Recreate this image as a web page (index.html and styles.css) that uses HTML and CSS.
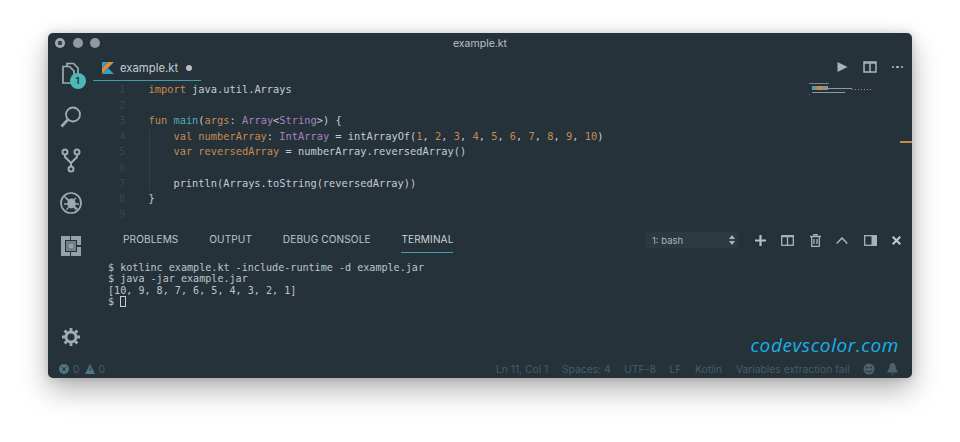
FILE: index.html
```html
<!DOCTYPE html>
<html lang="en">
<head>
<meta charset="utf-8">
<title>example.kt</title>
<link rel="stylesheet" href="styles.css">
</head>
<body>
<div class="window">
  <header class="titlebar">
    <div class="lights"><span class="light light-first"></span><span class="light"></span><span class="light"></span></div>
    <div class="title">example.kt</div>
  </header>
  <div class="main">
    <nav class="activity">
      <div class="act-icon">
        <svg width="26" height="26" viewBox="0 0 26 26" fill="none" stroke="#9fabaf" stroke-width="1.700"><path d="M9 5V2.500h6.500L20 7v10h-2.500"/><path d="M5 5.500h6.500L16 10v12H5z"/></svg>
        <span class="badge">1</span>
      </div>
      <div class="act-icon">
        <svg width="26" height="26" viewBox="0 0 26 26" fill="none" stroke="#9fabaf"><circle cx="15" cy="10.500" r="7" stroke-width="1.800"/><path d="M10 15.500l-6.500 7" stroke-width="2.600"/></svg>
      </div>
      <div class="act-icon">
        <svg width="26" height="26" viewBox="0 0 26 26" fill="none" stroke="#9fabaf" stroke-width="2"><circle cx="7" cy="5" r="2.500"/><circle cx="19" cy="5" r="2.500"/><circle cx="13" cy="22" r="2.500"/><path d="M7 7.500V10l6 6 6-6V7.500M13 16v3.500"/></svg>
      </div>
      <div class="act-icon">
        <svg width="26" height="26" viewBox="0 0 26 26" fill="none" stroke="#9fabaf" stroke-width="1.700"><circle cx="13" cy="13" r="10"/><path d="M6 6l14 14" stroke-width="1.500"/><ellipse cx="13.500" cy="13.500" rx="4.200" ry="5" fill="#9fabaf" stroke="none"/><path d="M8 8l3 2.500M18 8l-3 2.500M6 14h4M17 14h4M8.500 19.500L11 17M18 19.500L16 17" stroke-width="1.300"/></svg>
      </div>
      <div class="act-icon">
        <svg width="26" height="26" viewBox="0 0 26 26"><path d="M3 3h9v4H7v12h5v4H3z" fill="#95a3a8"/><path d="M13 3h10v9h-4V7h-6zM19 14h4v9H13v-4h6z" fill="#95a3a8"/><rect x="8" y="8" width="10" height="10" fill="#6f8087"/><rect x="11" y="11" width="4" height="4" fill="#95a3a8"/></svg>
      </div>
      <div class="act-icon act-gear">
        <svg width="20" height="20" viewBox="0 0 20 20" fill="none"><circle cx="10" cy="10" r="5" stroke="#9fabaf" stroke-width="3"/><path d="M10 1v4M10 15v4M1 10h4M15 10h4M3.600 3.600l2.900 2.900M13.500 13.500l2.900 2.900M16.400 3.600l-2.900 2.900M6.500 13.500l-2.900 2.900" stroke="#9fabaf" stroke-width="2.800"/></svg>
      </div>
    </nav>
    <div class="content">
      <div class="tabbar">
        <div class="tab">
          <svg class="kt" width="12" height="12" viewBox="0 0 12 12"><path d="M0 0h6L0 6z" fill="#2d9fc9"/><path d="M6 0h6L0 12V6z" fill="#e08a3c"/><path d="M0 12l6-6 6 6z" fill="#2d9fc9"/></svg>
          <span class="tab-name">example.kt</span>
          <span class="dirty"></span>
        </div>
        <div class="editor-actions">
          <svg width="12" height="12" viewBox="0 0 12 12"><path d="M1.500 1l10 5-10 5z" fill="#a9b5b8"/></svg>
          <svg width="14" height="12" viewBox="0 0 14 12" fill="none" stroke="#a9b5b8" stroke-width="1.500"><rect x="1" y="1" width="12" height="10"/><path d="M7 1v10M1 2h12" /></svg>
          <span class="dots"><i></i><i></i><i></i></span>
        </div>
      </div>
      <section class="editor">
        <div class="line"><span class="num">1</span><span class="code"><span class="k">import</span> java.util.Arrays</span></div>
        <div class="line"><span class="num">2</span><span class="code"></span></div>
        <div class="line"><span class="num">3</span><span class="code"><span class="k">fun</span> <span class="f">main</span>(<span class="k">args</span>: <span class="t">Array</span>&lt;<span class="t">String</span>&gt;) {</span></div>
        <div class="line"><span class="num">4</span><span class="code guide">    <span class="k">val numberArray</span>: <span class="t">IntArray</span> = intArrayOf(<span class="k">1</span>, <span class="k">2</span>, <span class="k">3</span>, <span class="k">4</span>, <span class="k">5</span>, <span class="k">6</span>, <span class="k">7</span>, <span class="k">8</span>, <span class="k">9</span>, <span class="k">10</span>)</span></div>
        <div class="line"><span class="num">5</span><span class="code guide">    <span class="k">var reversedArray</span> = numberArray.reversedArray()</span></div>
        <div class="line"><span class="num">6</span><span class="code guide"></span></div>
        <div class="line"><span class="num">7</span><span class="code guide">    println(Arrays.toString(reversedArray))</span></div>
        <div class="line"><span class="num">8</span><span class="code">}</span></div>
        <div class="line"><span class="num">9</span><span class="code"></span></div>
        <div class="minimap">
          <i class="mm mm-a"></i>
          <i class="mm mm-b"></i>
          <i class="mm mm-c"></i>
          <i class="mm mm-d"></i>
          <i class="mm mm-e"></i>
          <i class="mm mm-f"></i>
        </div>
        <i class="ruler"></i>
      </section>
      <section class="panel">
        <div class="panel-head">
          <div class="panel-tabs">
            <span class="ptab">PROBLEMS</span>
            <span class="ptab">OUTPUT</span>
            <span class="ptab">DEBUG CONSOLE</span>
            <span class="ptab ptab-on">TERMINAL</span>
          </div>
          <div class="panel-actions">
            <div class="select"><span>1: bash</span><svg width="6" height="10" viewBox="0 0 6 10"><path d="M3 0l3 4H0zM3 10L0 6h6z" fill="#a9b5b8"/></svg></div>
            <svg width="11" height="11" viewBox="0 0 11 11"><path d="M5.500 0v11M0 5.500h11" stroke="#b4bfc2" stroke-width="2.200"/></svg>
            <svg width="13" height="11" viewBox="0 0 13 11" fill="none" stroke="#a9b5b8" stroke-width="1.300"><rect x=".7" y=".7" width="11.600" height="9.600"/><path d="M6.500 1v10M1 1.500h11"/></svg>
            <svg width="11" height="13" viewBox="0 0 11 13" fill="none" stroke="#a9b5b8" stroke-width="1.300"><path d="M0 2.500h11M4 2.500V.7h3v1.800M1.700 2.500v9.800h7.600V2.500M4 5v5M7 5v5"/></svg>
            <svg width="12" height="7" viewBox="0 0 12 7" fill="none" stroke="#a9b5b8" stroke-width="1.500"><path d="M.7 6.500L6 1l5.300 5.500"/></svg>
            <svg width="13" height="11" viewBox="0 0 13 11"><rect x=".7" y=".7" width="11.600" height="9.600" fill="none" stroke="#a9b5b8" stroke-width="1.300"/><rect x="7.500" y="1" width="5" height="9" fill="#a9b5b8"/></svg>
            <svg width="9" height="9" viewBox="0 0 9 9"><path d="M.7.700l7.600 7.600M8.300.700L.7 8.300" stroke="#c0cacc" stroke-width="2"/></svg>
          </div>
        </div>
        <div class="terminal">
          <div class="term-line">$ kotlinc example.kt -include-runtime -d example.jar</div>
          <div class="term-line">$ java -jar example.jar</div>
          <div class="term-line">[10, 9, 8, 7, 6, 5, 4, 3, 2, 1]</div>
          <div class="term-line">$ <span class="cursor"></span></div>
        </div>
        <div class="brand">codevscolor.com</div>
      </section>
    </div>
  </div>
  <footer class="status">
    <div class="status-left">
      <svg width="10" height="10" viewBox="0 0 10 10"><circle cx="5" cy="5" r="5" fill="#4f7486"/><path d="M3 3l4 4M7 3L3 7" stroke="#25323a" stroke-width="1"/></svg><span>0</span>
      <svg width="10" height="10" viewBox="0 0 10 10"><path d="M5 0l5 10H0z" fill="#4f7486"/><path d="M5 3.500v3.500" stroke="#25323a" stroke-width="1"/></svg><span>0</span>
    </div>
    <div class="status-right">
      <span>Ln 11, Col 1</span>
      <span>Spaces: 4</span>
      <span>UTF-8</span>
      <span>LF</span>
      <span>Kotlin</span>
      <span>Variables extraction fail</span>
      <svg width="12" height="12" viewBox="0 0 12 12" fill="none"><circle cx="6" cy="6" r="5.500" fill="#4f626c"/><circle cx="4" cy="4.500" r="1" fill="#25323a"/><circle cx="8" cy="4.500" r="1" fill="#25323a"/><path d="M3 7c1 2.500 5 2.500 6 0" stroke="#25323a"/></svg>
      <svg class="bell" width="11" height="12" viewBox="0 0 11 12"><path d="M5.500 0c2 0 3 1.500 3 3.500 0 3 2.500 5 2.500 6H0c0-1 2.500-3 2.500-6C2.500 1.500 3.500 0 5.500 0zM4 10.500h3L5.500 12z" fill="#4f626c"/></svg>
    </div>
  </footer>
</div>
</body>
</html>
```
FILE: styles.css
```css
* { box-sizing: border-box; }
html, body { margin: 0; height: 100%; background: #fff; overflow: hidden; }
body { padding: 33px 48px 0; font-family: Inter, "Liberation Sans", sans-serif; }

.window {
  width: 864px;
  height: 345px;
  background: #25323a;
  border-radius: 5px;
  box-shadow: 0 12px 28px rgba(0, 0, 0, .3), 0 0 10px rgba(0, 0, 0, .16);
  display: flex;
  flex-direction: column;
  overflow: hidden;
  color: #c4cdd1;
}

.titlebar { height: 20px; flex: none; display: flex; align-items: center; position: relative; }
.lights { display: flex; gap: 7.500px; padding-left: 7px; }
.light { width: 10px; height: 10px; border-radius: 50%; background: #8f9b9f; }
.light-first { background: radial-gradient(circle, #33434b 0 2px, #a0abae 2.600px); }
.title { position: absolute; left: 0; right: 0; text-align: center; font-size: 10.500px; color: #b9c3c6; }

.main { flex: 1; display: flex; min-height: 0; }

.activity { width: 45px; flex: none; display: flex; flex-direction: column; align-items: center; padding: 8px 0 13px; gap: 17px; }
.act-icon { width: 26px; height: 26px; position: relative; flex: none; }
.act-gear { margin-top: auto; height: 20px; width: 20px; }
.badge {
  position: absolute; left: 12px; top: 12px; width: 16px; height: 16px; border-radius: 50%;
  background: #4cb8b8; color: #1f2c32; font-size: 9.500px; font-weight: 600; text-align: center; line-height: 16px;
}

.content { flex: 1; min-width: 0; display: flex; flex-direction: column; }

.tabbar { height: 28px; flex: none; display: flex; justify-content: space-between; align-items: center; }
.tab { width: 108px; height: 28px; display: flex; align-items: center; padding: 2px 0 0 9px; border-bottom: 1px solid #3f9ea6; }
.kt { flex: none; }
.tab-name { font-size: 11.300px; margin-left: 6px; color: #c4cdd1; }
.dirty { width: 6px; height: 6px; border-radius: 50%; background: #b4bec1; margin-left: 8px; }
.editor-actions { display: flex; align-items: center; gap: 15px; padding-right: 9px; }
.dots { display: flex; gap: 2px; }
.dots i { width: 2.500px; height: 2.500px; border-radius: 50%; background: #b4bec1; }

.editor { position: relative; height: 146px; padding-top: 1px; font-family: "DejaVu Sans Mono", monospace; font-size: 10.350px; flex: none; }
.line { height: 15.600px; line-height: 15.600px; display: flex; white-space: pre; }
.num { width: 55.500px; flex: none; padding-left: 26px; color: #37464e; }
.code { flex: 1; color: #c4cdd1; }
.guide { background: linear-gradient(#303f47, #303f47) 0 0 / 1px 100% no-repeat; }
.k { color: #c98a50; }
.f { color: #55aab3; }
.t { color: #a584bd; }

.minimap { position: absolute; left: 716px; top: 1px; width: 70px; height: 14px; }
.mm { position: absolute; display: block; height: 1px; }
.mm-a { left: 0; top: 1px; width: 20px; background: #77868b; }
.mm-b { left: 19px; top: 6px; width: 24px; background: #8d9a9e; }
.mm-c { left: 3px; top: 4px; width: 16px; height: 4px; background: linear-gradient(90deg, #5f96a8 0 30%, #c98a50 30% 65%, #8c8fa0 65%); }
.mm-d { left: 43px; top: 7px; width: 20px; background: repeating-linear-gradient(90deg, #c98a50 0 1px, transparent 1px 3px); }
.mm-e { left: 3px; top: 10px; width: 33px; background: #8d9a9e; }
.mm-f { left: 0; top: 12px; width: 1px; background: #77868b; }
.ruler { position: absolute; right: 0; top: 60px; width: 12px; height: 1.500px; background: #c98a50; }

.panel { flex: 1; min-height: 0; display: flex; flex-direction: column; position: relative; }
.panel-head { height: 26px; flex: none; display: flex; justify-content: space-between; align-items: stretch; padding: 0 11px 0 30px; }
.panel-tabs { display: flex; gap: 30.800px; }
.ptab { font-size: 10.100px; color: #bcc6c9; height: 26px; line-height: 25px; border-bottom: 1px solid transparent; letter-spacing: .1px; }
.ptab-on { border-color: #3f9ea6; color: #c9d2d5; }
.panel-actions { display: flex; align-items: center; gap: 15.500px; }
.select { width: 93px; height: 16px; margin-right: 1px; border-radius: 4px; background: #2b3942; display: flex; justify-content: space-between; align-items: center; padding: 0 3px 0 7px; font-size: 9.500px; color: #a9b5b8; }

.terminal { padding: 9px 0 0 15px; font-family: "DejaVu Sans Mono", monospace; font-size: 10.100px; line-height: 11.400px; color: #bcc6c9; }
.term-line { white-space: pre; height: 11.400px; }
.cursor { display: inline-block; width: 6px; height: 11px; border: 1px solid #c4cdd1; vertical-align: -2px; }

.brand {
  position: absolute; right: 13px; bottom: 2px;
  font-family: "Open Sans", sans-serif; font-style: italic; font-size: 19px; letter-spacing: .6px; color: #17b1e6;
}

.status { height: 18px; flex: none; display: flex; justify-content: space-between; align-items: center; padding: 0 14px 0 11px; font-size: 10.300px; color: #4a5c66; }
.status-left { display: flex; align-items: center; gap: 4px; }
.status-left span { margin-right: 1px; }
.status-right { display: flex; align-items: center; gap: 13.700px; }
.bell { margin-left: -2px; }
```
